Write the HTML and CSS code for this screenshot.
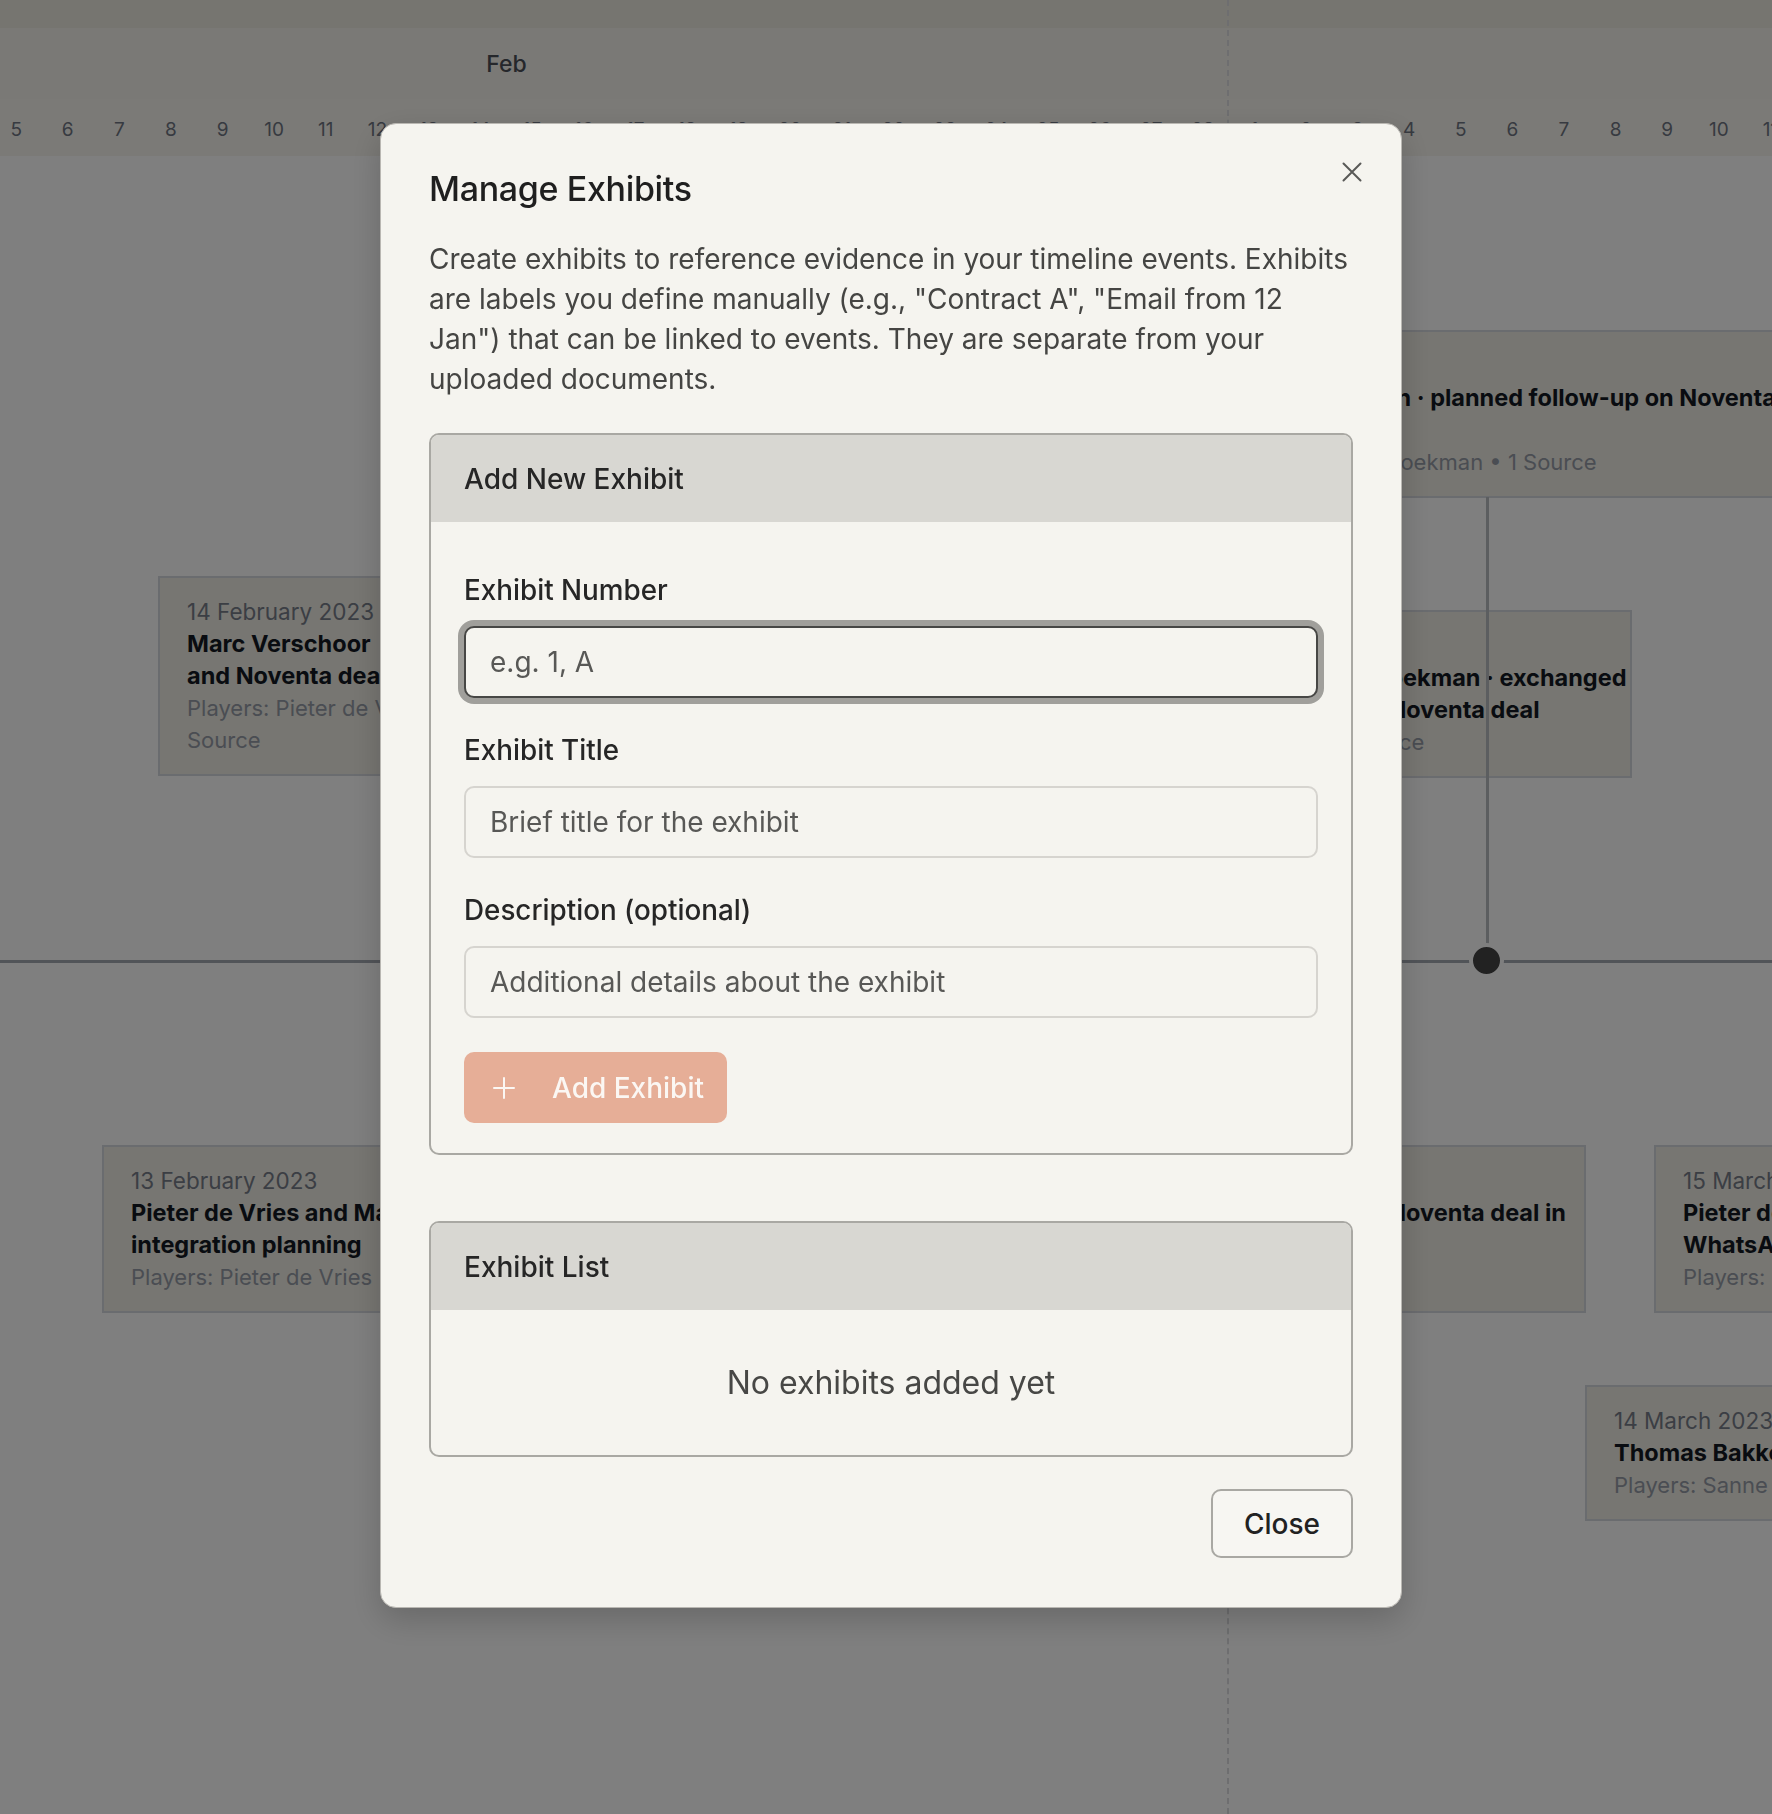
FILE: index.html
```html
<!DOCTYPE html>
<html lang="en">
<head>
<meta charset="utf-8">
<title>Timeline – Manage Exhibits</title>
<link rel="stylesheet" href="styles.css">
</head>
<body>
<div class="app">
  <div class="topbar"></div>
  <div class="months">
    <div class="month month-feb">Feb</div>
    <div class="month month-mar">Mar</div>
  </div>
  <div class="days">
    <span class="day">1</span><span class="day">2</span><span class="day">3</span><span class="day">4</span><span class="day">5</span><span class="day">6</span><span class="day">7</span><span class="day">8</span><span class="day">9</span><span class="day">10</span><span class="day">11</span><span class="day">12</span><span class="day">13</span><span class="day">14</span><span class="day">15</span><span class="day">16</span><span class="day">17</span><span class="day">18</span><span class="day">19</span><span class="day">20</span><span class="day">21</span><span class="day">22</span><span class="day">23</span><span class="day">24</span><span class="day">25</span><span class="day">26</span><span class="day">27</span><span class="day">28</span><span class="day">1</span><span class="day">2</span><span class="day">3</span><span class="day">4</span><span class="day">5</span><span class="day">6</span><span class="day">7</span><span class="day">8</span><span class="day">9</span><span class="day">10</span><span class="day">11</span><span class="day">12</span>
  </div>
  <div class="canvas">
    <div class="axis"></div>

    <div class="event ev-1">
      <div class="ev-date">14 February 2023</div>
      <div class="ev-title">Marc Verschoor<br>and Noventa deal terms</div>
      <div class="ev-meta">Players: Pieter de Vries • 1<br>Source</div>
    </div>

    <div class="event ev-2">
      <div class="ev-date">13 February 2023</div>
      <div class="ev-title">Pieter de Vries and Marc Verschoor:<br>integration planning</div>
      <div class="ev-meta">Players: Pieter de Vries</div>
    </div>

    <div class="event ev-3">
      <div class="ev-date">14 March 2023</div>
      <div class="ev-title">Sanne Hoekman · planned follow-up on Noventa integration<br>call</div>
      <div class="ev-meta">Players: Sanne Hoekman • 1 Source</div>
    </div>

    <div class="event ev-4">
      <div class="ev-date">13 March 2023</div>
      <div class="ev-title">Thomas Bakker and Sanne Hoekman · exchanged<br>WhatsApp messages on the Noventa deal</div>
      <div class="ev-meta">Players: Thomas Bakker • 1 Source</div>
    </div>

    <div class="event ev-5">
      <div class="ev-date">12 March 2023</div>
      <div class="ev-title">Thomas Bakker reviewed the Noventa deal in<br>detail</div>
      <div class="ev-meta">Players: Thomas Bakker</div>
    </div>

    <div class="event ev-6">
      <div class="ev-date">15 March 2023</div>
      <div class="ev-title">Pieter de Vries and Marc<br>WhatsApp messages</div>
      <div class="ev-meta">Players: Pieter de Vries</div>
    </div>

    <div class="event ev-7">
      <div class="ev-date">14 March 2023</div>
      <div class="ev-title">Thomas Bakker call</div>
      <div class="ev-meta">Players: Sanne Hoekman</div>
    </div>

    <div class="connector"></div>
    <div class="node"></div>
  </div>
  <div class="today-line"></div>
</div>

<div class="overlay">
  <div class="modal" role="dialog" aria-labelledby="modal-title">
    <button class="modal-x" aria-label="Close">
      <svg viewBox="0 0 20 20" width="20" height="20" aria-hidden="true"><path d="M1.5 1.5 L18.5 18.5 M18.5 1.5 L1.5 18.5" fill="none" stroke="currentColor" stroke-width="2" stroke-linecap="round"/></svg>
    </button>
    <h2 class="modal-title" id="modal-title">Manage Exhibits</h2>
    <p class="modal-desc">Create exhibits to reference evidence in your timeline events. Exhibits are labels you define manually (e.g., "Contract A", "Email from 12 Jan") that can be linked to events. They are separate from your uploaded documents.</p>

    <section class="panel">
      <div class="panel-head">Add New Exhibit</div>
      <div class="panel-body">
        <div class="field">
          <label class="field-label" for="ex-num">Exhibit Number</label>
          <input class="input is-focused" id="ex-num" type="text" placeholder="e.g. 1, A">
        </div>
        <div class="field">
          <label class="field-label" for="ex-title">Exhibit Title</label>
          <input class="input" id="ex-title" type="text" placeholder="Brief title for the exhibit">
        </div>
        <div class="field">
          <label class="field-label" for="ex-desc">Description (optional)</label>
          <input class="input" id="ex-desc" type="text" placeholder="Additional details about the exhibit">
        </div>
        <button class="btn-add" type="button" disabled>
          <svg viewBox="0 0 22 22" width="22" height="22" aria-hidden="true"><path d="M11 1 V21 M1 11 H21" fill="none" stroke="currentColor" stroke-width="2" stroke-linecap="round"/></svg>
          <span>Add Exhibit</span>
        </button>
      </div>
    </section>

    <section class="panel panel-list">
      <div class="panel-head">Exhibit List</div>
      <div class="panel-empty">No exhibits added yet</div>
    </section>

    <div class="modal-foot">
      <button class="btn-close" type="button">Close</button>
    </div>
  </div>
</div>
</body>
</html>
```

FILE: styles.css
```css
* { box-sizing: border-box; }

html, body {
  margin: 0;
  padding: 0;
  height: 100%;
}

body {
  font-family: Inter, "Noto Sans", "Liberation Sans", sans-serif;
  background: #ffffff;
  overflow: hidden;
}

/* ---------- timeline (background page) ---------- */
.app {
  position: relative;
  width: 1772px;
  height: 1814px;
  overflow: hidden;
  background: #ffffff;
}

.topbar {
  height: 28px;
  background: #eceae1;
}

.months {
  display: flex;
  height: 71px;
  margin-left: -216px;
  background: #f5f3ed;
}

.month {
  flex: none;
  display: flex;
  align-items: center;
  justify-content: center;
  font-size: 23px;
  font-weight: 500;
  color: #4b4f57;
}

.month-feb { width: 1444.8px; }
.month-mar { width: 1599.6px; }

.days {
  display: flex;
  height: 57px;
  padding-top: 3px;
  margin-left: -216px;
  background: #f6f4ee;
  align-items: center;
}

.day {
  flex: none;
  width: 51.6px;
  text-align: center;
  font-size: 19px;
  color: #6f7582;
}

.canvas {
  position: relative;
  height: 1658px;
}

.axis {
  position: absolute;
  left: 0;
  right: 0;
  top: 804px;
  height: 3px;
  background: #a3a8b1;
}

.today-line {
  position: absolute;
  top: 0;
  bottom: 0;
  left: 1227px;
  border-left: 2px dashed #dcdde0;
}

.event {
  position: absolute;
  padding: 18px 27px;
  background: #eeece4;
  border: 2px solid #d5d8de;
  white-space: nowrap;
  overflow: hidden;
  font-size: 22.5px;
  line-height: 32px;
  z-index: 1;
}

.ev-date { color: #777d89; }
.ev-title { color: #131822; font-weight: 700; font-size: 23.5px; }
.ev-meta { color: #959ba6; font-size: 22px; }

.ev-1 { left: 158px; top: 420px; width: 440px; }
.ev-2 { left: 102px; top: 989px; width: 480px; }
.ev-3 { left: 1195px; top: 174px; width: 800px; }
.ev-4 { left: 1032px; top: 454px; width: 600px; }
.ev-5 { left: 1022px; top: 989px; width: 564px; }
.ev-6 { left: 1654px; top: 989px; width: 420px; }
.ev-7 { left: 1585px; top: 1229px; width: 420px; }

.connector {
  position: absolute;
  left: 1486px;
  top: 341px;
  width: 3px;
  height: 452px;
  background: #b9bcc1;
  z-index: 2;
}

.node {
  position: absolute;
  left: 1469px;
  top: 787px;
  width: 35px;
  height: 35px;
  border-radius: 50%;
  background: #454545;
  border: 4px solid #ffffff;
  z-index: 3;
}

/* ---------- modal ---------- */
.overlay {
  position: fixed;
  inset: 0;
  background: rgba(0, 0, 0, 0.5);
  display: flex;
  justify-content: center;
  align-items: flex-start;
  padding: 123px 0 0 10px;
  z-index: 10;
}

.modal {
  position: relative;
  width: 1022px;
  background: #f5f4ef;
  border: 1px solid #b9b7b2;
  border-radius: 16px;
  padding: 44px 48px 49px;
  box-shadow: 0 12px 32px rgba(0, 0, 0, 0.18);
  color: #262626;
}

.modal-x {
  position: absolute;
  top: 38px;
  right: 39px;
  width: 20px;
  height: 20px;
  padding: 0;
  border: 0;
  background: none;
  color: #595957;
  display: flex;
}

.modal-title {
  margin: 0;
  font-size: 34px;
  line-height: 41px;
  font-weight: 500;
  letter-spacing: -0.01em;
  color: #1f1f1f;
}

.modal-desc {
  margin: 30px 0 0;
  font-size: 28px;
  line-height: 40px;
  color: #454543;
}

.panel {
  margin-top: 34px;
  border: 2px solid #a9a8a3;
  border-radius: 10px;
  overflow: hidden;
}

.panel-list { margin-top: 66px; }

.panel-head {
  height: 87px;
  display: flex;
  align-items: center;
  padding: 0 33px;
  background: #d8d7d2;
  font-size: 28px;
  font-weight: 500;
  color: #262626;
}

.panel-body {
  padding: 50px 33px 30px;
  display: flex;
  flex-direction: column;
  align-items: flex-start;
}

.field {
  align-self: stretch;
  display: flex;
  flex-direction: column;
  margin-bottom: 34px;
}

.field-label {
  font-size: 27.8px;
  line-height: 36px;
  font-weight: 500;
  color: #262626;
  margin-bottom: 18px;
}

.input {
  height: 72px;
  width: 100%;
  padding: 0 24px;
  font-family: inherit;
  font-size: 28px;
  color: #262626;
  background: #f5f4ef;
  border: 2px solid #d6d4cf;
  border-radius: 10px;
  outline: none;
}

.input::placeholder { color: #585856; opacity: 1; }

.input.is-focused {
  border-color: #474745;
  box-shadow: 0 0 0 6px #a09f9b;
}

.btn-add {
  height: 71px;
  display: inline-flex;
  align-items: center;
  gap: 37px;
  padding: 0 23px 0 29px;
  border: 0;
  border-radius: 10px;
  background: #e6ae97;
  color: #fbf7f3;
  font-family: inherit;
  font-size: 28px;
  font-weight: 500;
}

.btn-add svg { flex: none; }

.panel-empty {
  height: 145px;
  display: flex;
  align-items: center;
  justify-content: center;
  font-size: 32px;
  color: #474745;
}

.modal-foot {
  margin-top: 32px;
  display: flex;
  justify-content: flex-end;
}

.btn-close {
  width: 142px;
  height: 69px;
  border: 2px solid #a9a8a3;
  border-radius: 10px;
  background: #f7f6f2;
  font-family: inherit;
  font-size: 28px;
  font-weight: 500;
  color: #222222;
}
```
